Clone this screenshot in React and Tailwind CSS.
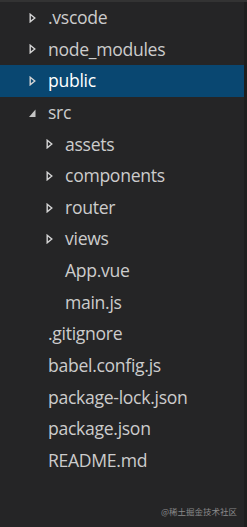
import React from "react";

const rows = [
  { name: ".vscode", level: 0, type: "closed" },
  { name: "node_modules", level: 0, type: "closed" },
  { name: "public", level: 0, type: "closed", selected: true },
  { name: "src", level: 0, type: "open" },
  { name: "assets", level: 1, type: "closed" },
  { name: "components", level: 1, type: "closed" },
  { name: "router", level: 1, type: "closed" },
  { name: "views", level: 1, type: "closed" },
  { name: "App.vue", level: 1, type: "file" },
  { name: "main.js", level: 1, type: "file" },
  { name: ".gitignore", level: 0, type: "file" },
  { name: "babel.config.js", level: 0, type: "file" },
  { name: "package-lock.json", level: 0, type: "file" },
  { name: "package.json", level: 0, type: "file" },
  { name: "README.md", level: 0, type: "file" },
];

function Arrow({ type }) {
  if (type === "closed") {
    return (
      <svg width="7" height="10" viewBox="0 0 7 10" className="shrink-0">
        <path d="M1.2 1.2 L5.8 5 L1.2 8.8 Z" fill="none" stroke="#d4d4d4" strokeWidth="1.4" strokeLinejoin="miter" />
      </svg>
    );
  }
  if (type === "open") {
    return (
      <svg width="7" height="10" viewBox="0 0 7 10" className="shrink-0">
        <path d="M6.5 1.5 L6.5 9 L0 9 Z" fill="#c5c5c5" />
      </svg>
    );
  }
  return <span className="w-[7px] shrink-0" />;
}

export default function App() {
  return (
    <div className="w-[247px] h-[527px] bg-[#252526] flex flex-col relative overflow-hidden" style={{ fontFamily: '"Open Sans", "Noto Sans", sans-serif' }}>
      <div className="h-[2px] bg-[#333333] shrink-0" />
      <div className="flex flex-1">
        <div className="flex flex-col w-[244px]">
          {rows.map((r) => (
            <div
              key={r.name}
              className={`h-[31.64px] flex items-center ${r.selected ? "bg-[#094771] text-white" : "text-[#cccccc]"}`}
              style={{ paddingLeft: 29 + r.level * 17 }}
            >
              <Arrow type={r.type} />
              <span className="ml-[12px] text-[17.6px] leading-none tracking-[-0.3px]">{r.name}</span>
            </div>
          ))}
        </div>
        <div className="w-[3px] bg-[#1e1e1e]" />
      </div>
      <div className="absolute right-[10px] bottom-[12px] text-[8.5px] text-[#8a8a8a] leading-none" style={{ fontFamily: '"Noto Sans CJK SC", sans-serif' }}>
        @稀土掘金技术社区
      </div>
    </div>
  );
}
